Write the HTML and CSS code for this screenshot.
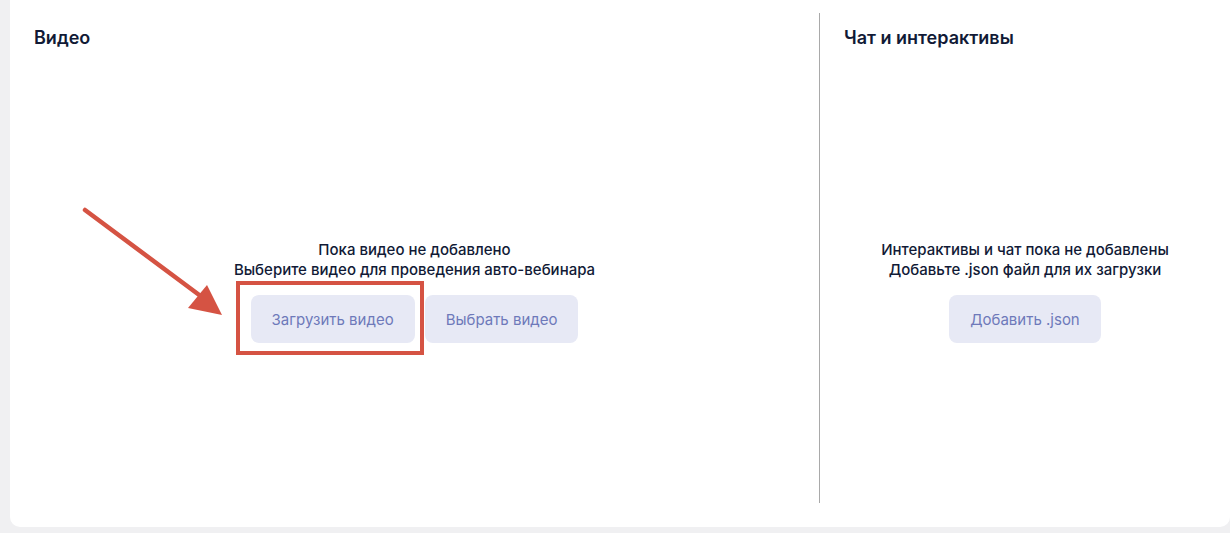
FILE: index.html
```html
<!DOCTYPE html>
<html lang="ru">
<head>
    <meta charset="UTF-8">
    <title>Авто-вебинар</title>
    <link rel="stylesheet" href="styles.css">
</head>
<body>
    <div class="card">
        <!-- Video -->
        <section class="panel panel-video">
            <h2 class="panel-title">Видео</h2>
            <div class="panel-body">
                <p class="empty-text">Пока видео не добавлено<br>Выберите видео для проведения авто-вебинара</p>
                <div class="actions">
                    <div class="highlight-wrap">
                        <button class="btn">Загрузить видео</button>
                        <span class="highlight"></span>
                    </div>
                    <button class="btn">Выбрать видео</button>
                </div>
            </div>
        </section>

        <div class="divider"></div>

        <!-- Chat -->
        <section class="panel panel-chat">
            <h2 class="panel-title">Чат и интерактивы</h2>
            <div class="panel-body">
                <p class="empty-text">Интерактивы и чат пока не добавлены<br>Добавьте .json файл для их загрузки</p>
                <div class="actions">
                    <button class="btn">Добавить .json</button>
                </div>
            </div>
        </section>

        <svg class="arrow" width="160" height="130" viewBox="0 0 160 130">
            <line x1="5" y1="5" x2="130" y2="98" stroke="#d55343" stroke-width="4.5" stroke-linecap="round"/>
            <polygon points="142,110 127,80 108,103" fill="#d55343"/>
        </svg>
    </div>
</body>
</html>
```

FILE: styles.css
```css
* {
    margin: 0;
    padding: 0;
    box-sizing: border-box;
}

body {
    background-color: #f0f0f2;
    font-family: 'Inter', 'Noto Sans', sans-serif;
    color: #111a36;
}

/* Card */
.card {
    position: relative;
    margin-left: 10px;
    height: 527px;
    background-color: #fff;
    border-radius: 0 0 10px 10px;
    display: grid;
    grid-template-columns: 809px 1px 1fr;
}

.divider {
    background-color: #a9a9a9;
    margin: 13px 0 24px;
}

.panel {
    display: flex;
    flex-direction: column;
    padding: 28px 24px 0;
}

.panel-title {
    font-size: 18px;
    font-weight: 600;
    line-height: 20px;
}

.panel-body {
    flex: 1;
    display: flex;
    flex-direction: column;
    align-items: center;
    justify-content: center;
    padding-top: 8px;
}

.empty-text {
    font-size: 15px;
    font-weight: 500;
    line-height: 20px;
    text-align: center;
    margin-bottom: 15px;
}

.actions {
    display: flex;
    gap: 10px;
}

.btn {
    height: 48px;
    padding: 0 21px;
    border: none;
    border-radius: 8px;
    background-color: #e7e9f5;
    color: #6e79ba;
    font-family: inherit;
    font-size: 15px;
    cursor: pointer;
}

/* Annotation */
.highlight-wrap {
    position: relative;
}

.highlight {
    position: absolute;
    left: -15px;
    right: -9px;
    top: -14px;
    bottom: -12px;
    border: 4px solid #d55343;
}

.arrow {
    position: absolute;
    left: 70px;
    top: 205px;
}
```
